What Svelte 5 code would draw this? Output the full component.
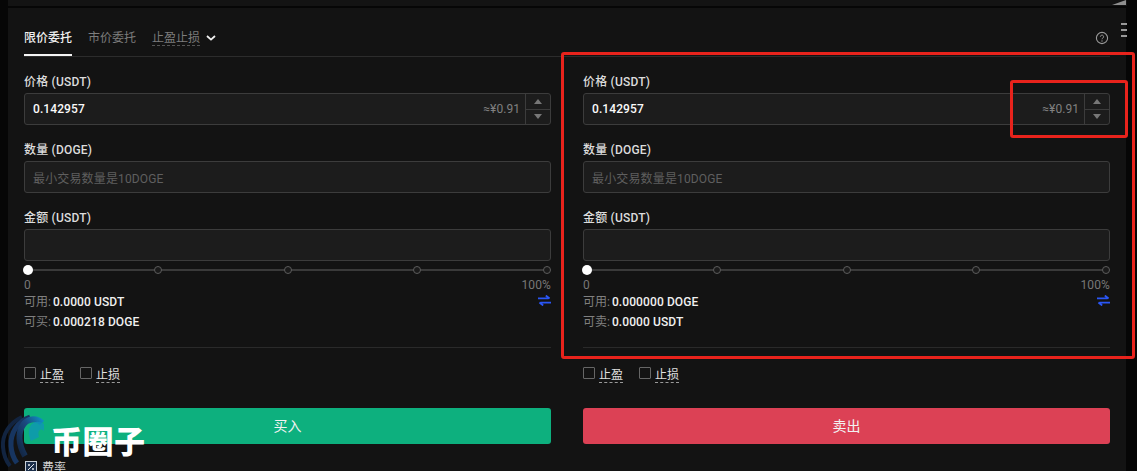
<script>
  const cols = [
    { amount: '0.0000 USDT', maxLabel: '可买', max: '0.000218 DOGE', action: '买入', kind: 'buy' },
    { amount: '0.000000 DOGE', maxLabel: '可卖', max: '0.0000 USDT', action: '卖出', kind: 'sell' }
  ];
  const stops = [0, 1, 2, 3, 4];
</script>

<div class="page">
  <div class="strip"></div>
  <div class="panel">
    <div class="tabs">
      <span class="tab active">限价委托</span>
      <span class="tab">市价委托</span>
      <span class="tab dotted">止盈止损</span>
      <svg class="chev" width="10" height="6" viewBox="0 0 10 6"><path d="M1 1l4 3.6L9 1" fill="none" stroke="#f0f0f0" stroke-width="1.8"/></svg>
      <svg class="help" width="14" height="14" viewBox="0 0 14 14"><circle cx="7" cy="7" r="5.6" fill="none" stroke="#9a9a9a" stroke-width="1.1"/><path d="M5.4 5.700a1.600 1.600 0 1 1 2.500 1.300c-.6.4-.9.7-.9 1.300" fill="none" stroke="#9a9a9a"/><circle cx="7" cy="10" r=".7" fill="#9a9a9a"/></svg>
    </div>

    <div class="cols">
      {#each cols as c}
        <div class="col">
          <div class="label">价格 (USDT)</div>
          <div class="box">
            <span class="val">0.142957</span>
            <span class="approx">≈¥0.91</span>
            <div class="stepper">
              <span class="step"><i class="up"></i></span>
              <span class="step"><i class="down"></i></span>
            </div>
          </div>
          <div class="label">数量 (DOGE)</div>
          <div class="box"><span class="ph">最小交易数量是10DOGE</span></div>
          <div class="label">金额 (USDT)</div>
          <div class="box"></div>

          <div class="slider">
            {#each stops as s}
              <span class="stop" class:first={s === 0}></span>
            {/each}
          </div>
          <div class="scale"><span>0</span><span>100%</span></div>

          <div class="info">
            <div class="row"><span class="k">可用:</span> <span class="v">{c.amount}</span>
              <svg class="swap" width="13" height="11" viewBox="0 0 13 11"><path d="M0 3.400h10.500M7.800.6l3.800 2.800M13 7.600H2.500M5.200 10.400L1.400 7.600" fill="none" stroke="#2a56f5" stroke-width="1.900"/></svg>
            </div>
            <div class="row"><span class="k">{c.maxLabel}:</span> <span class="v">{c.max}</span></div>
          </div>

          <div class="divider"></div>

          <div class="checks">
            <span class="check"><span class="cb"></span><span class="cl">止盈</span></span>
            <span class="check"><span class="cb"></span><span class="cl">止损</span></span>
          </div>

          <button class="action {c.kind}">{c.action}</button>
        </div>
      {/each}
    </div>

    <div class="fee">
      <svg width="12" height="12" viewBox="0 0 12 12"><rect x=".5" y=".5" width="11" height="11" fill="#1c2f4a" stroke="#c8d0d8"/><path d="M3 9l6-6" stroke="#e4e8ee"/><circle cx="4" cy="4" r="1" fill="#e4e8ee"/><circle cx="8" cy="8" r="1" fill="#e4e8ee"/></svg>
      <span>费率</span>
    </div>
  </div>

  <div class="grip"><i></i><i></i><i></i></div>
  <svg class="corner" width="14" height="5" viewBox="0 0 14 5"><path d="M0 5L14 0v5z" fill="#8f8f8f"/></svg>

  <div class="red big"></div>
  <div class="red small"></div>

  <div class="wm">
    <svg width="54" height="62" viewBox="0 0 54 62">
      <defs>
        <linearGradient id="wmg" x1="0" y1="1" x2="1" y2="0">
          <stop offset="0" stop-color="#12233f"/>
          <stop offset=".6" stop-color="#1b4a80"/>
          <stop offset="1" stop-color="#0f8cc0"/>
        </linearGradient>
      </defs>
      <path d="M22 8C9 14 2 26 3 38c.6 8 3 14 7 19" fill="none" stroke="#122440" stroke-width="4"/>
      <path d="M30 8C18 12 10 24 11 37c.5 7 3 13 6 17" fill="none" stroke="#173560" stroke-width="5"/>
      <path d="M42 14c-6-6-15-4-19 2-5 7-5 19 2 31" fill="none" stroke="url(#wmg)" stroke-width="6"/>
      <path d="M44 15c-6-4-12-2-14 3-2 4-1 9 1 14l8-4c-1-3-1-6 1-7 2-1 3 0 4 1z" fill="#0f95b8" opacity=".75"/>
    </svg>
    <span class="wm-text">币圈子</span>
  </div>
</div>

<style>
  :global(body) { margin: 0; background: #0b0b0b; overflow: hidden; }
  .page {
    position: relative;
    width: 1137px;
    height: 471px;
    overflow: hidden;
    background: #060606;
    font-family: Roboto, "Noto Sans CJK SC", sans-serif;
    font-size: 12px;
    color: #e8e8e8;
  }
  .strip { height: 6px; margin-left: 8px; margin-right: 10px; background: #131313; }
  .panel {
    margin: 2px 11px 0 8px;
    height: 463px;
    box-sizing: border-box;
    padding: 0 16px;
    background: #131313;
  }
  .tabs {
    height: 49px;
    box-sizing: border-box;
    display: flex;
    align-items: center;
    gap: 16px;
    padding-top: 12px;
    border-bottom: 1px solid #2c2c2c;
  }
  .tab { color: #7d7d7d; line-height: 36px; height: 36px; box-sizing: border-box; }
  .tab.active { color: #f0f0f0; border-bottom: 2px solid #f4f4f4; font-weight: 500; }
  .tab.dotted { text-decoration: underline dashed #555; text-underline-offset: 3px; }
  .chev { margin-left: -10px; }
  .help { margin-left: auto; margin-right: 1px; }
  .cols { display: grid; grid-template-columns: 527px 527px; column-gap: 32px; }
  .col { min-width: 0; }
  .label { height: 17px; line-height: 17px; margin: 17px 0 2px; color: #dcdcdc; font-weight: 500; letter-spacing: .2px; }
  .box {
    height: 32px;
    box-sizing: border-box;
    display: flex;
    align-items: center;
    background: #1c1c1c;
    border: 1px solid #3c3c3c;
    border-radius: 3px;
    padding-left: 8px;
  }
  .val { font-weight: 500; color: #fafafa; letter-spacing: .1px; }
  .approx { margin-left: auto; color: #808080; margin-right: 5px; letter-spacing: .05px; }
  .ph { color: #5f5f5f; letter-spacing: .15px; }
  .stepper {
    width: 24px;
    height: 100%;
    border-left: 1px solid #3c3c3c;
    display: flex;
    flex-direction: column;
  }
  .step { flex: 1; display: flex; align-items: center; justify-content: center; }
  .step + .step { border-top: 1px solid #3c3c3c; }
  .up, .down { width: 0; height: 0; border-left: 4px solid transparent; border-right: 4px solid transparent; }
  .up { border-bottom: 5px solid #777; }
  .down { border-top: 5px solid #777; }
  .slider {
    position: relative;
    margin: 8px 4px 0;
    height: 2px;
    background: #3a3a3a;
    display: flex;
    justify-content: space-between;
    align-items: center;
  }
  .stop {
    width: 8px;
    height: 8px;
    margin: 0 -4px;
    box-sizing: border-box;
    border: 1px solid #5c5c5c;
    border-radius: 50%;
    background: #1a1a1a;
  }
  .stop.first { width: 10px; height: 10px; margin: 0 -5px; background: #fff; border: 0; }
  .scale { display: flex; justify-content: space-between; margin-top: 7px; line-height: 14px; color: #777; letter-spacing: .15px; }
  .info { margin-top: 0; }
  .row { position: relative; height: 20px; line-height: 20px; display: flex; gap: 2px; }
  .k { color: #808080; }
  .v { color: #f0f0f0; font-weight: 500; letter-spacing: .1px; }
  .swap { position: absolute; right: 0; top: 3px; }
  .divider { height: 1px; background: #2a2a2a; margin-top: 15px; }
  .checks { display: flex; gap: 16px; margin-top: 16px; height: 18px; align-items: center; }
  .check { display: flex; align-items: center; gap: 4px; }
  .cb { width: 10px; height: 10px; border: 1px solid #666; border-radius: 1px; }
  .cl { color: #e0e0e0; text-decoration: underline dashed #999; text-underline-offset: 3px; }
  .action {
    display: block;
    width: 100%;
    height: 36px;
    margin-top: 26px;
    padding: 0;
    border: 0;
    border-radius: 3px;
    color: #f2f2f2;
    font: inherit;
    font-size: 14px;
    line-height: 35px;
  }
  .buy { background: #0db07e; }
  .sell { background: #dc4155; }
  .fee { display: flex; align-items: center; gap: 5px; margin-top: 14px; padding-left: 1px; color: #d4d4d4; }
  .grip { position: absolute; left: 1121px; top: 23px; display: flex; flex-direction: column; gap: 4px; }
  .grip i { display: block; width: 6px; height: 2px; background: #999; }
  .corner { position: absolute; left: 1112px; top: 0; }
  .red { position: absolute; box-sizing: border-box; border: 3px solid #e8231c; border-radius: 3px; }
  .big { left: 561px; top: 52px; width: 574px; height: 307px; }
  .small { left: 1010px; top: 80px; width: 118px; height: 58px; }
  .wm { position: absolute; left: 0; top: 409px; width: 150px; height: 62px; }
  .wm svg { position: absolute; left: 0; top: 0; }
  .wm-text {
    position: absolute;
    left: 51px;
    top: 12px;
    font-family: "Noto Sans CJK SC", sans-serif;
    font-size: 31px;
    line-height: 38px;
    font-weight: 900;
    color: #fff;
    letter-spacing: .5px;
    white-space: nowrap;
  }
</style>
